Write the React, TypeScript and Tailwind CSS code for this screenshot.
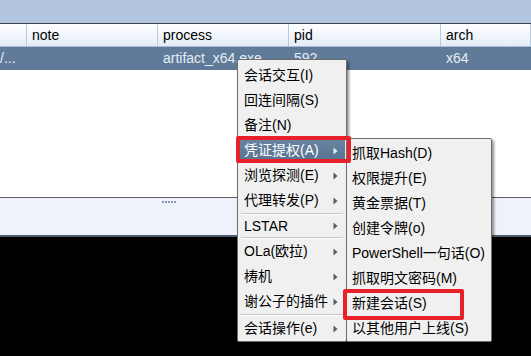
import { ReactNode } from 'react';

const font = { fontFamily: '"Liberation Sans", "Noto Sans CJK SC", sans-serif' };

type MenuItem = { label: string; sub?: boolean; active?: boolean; h?: string } | 'sep';

const mainItems: MenuItem[] = [
  { label: '会话交互(I)' },
  { label: '回连间隔(S)' },
  { label: '备注(N)' },
  { label: '凭证提权(A)', sub: true, active: true },
  { label: '浏览探测(E)', sub: true },
  { label: '代理转发(P)', sub: true },
  'sep',
  { label: 'LSTAR', sub: true, h: 'h-[22px]' },
  'sep',
  { label: 'OLa(欧拉)', sub: true },
  { label: '梼机', sub: true },
  { label: '谢公子的插件', sub: true },
  'sep',
  { label: '会话操作(e)', sub: true },
];

const subItems = [
  '抓取Hash(D)',
  '权限提升(E)',
  '黄金票据(T)',
  '创建令牌(o)',
  'PowerShell一句话(O)',
  '抓取明文密码(M)',
  '新建会话(S)',
  '以其他用户上线(S)',
];

function Arrow({ light }: { light?: boolean }) {
  return (
    <svg width="5" height="8" viewBox="0 0 5 8" className="absolute right-[7px] top-1/2 -translate-y-1/2">
      <path d="M0.5 0.5 L4.5 4 L0.5 7.5 Z" fill={light ? '#e6ecf3' : '#5a5a5a'} />
    </svg>
  );
}

function HeaderCell({ w, children }: { w: string; children?: ReactNode }) {
  return (
    <div className={`${w} h-full shrink-0 border-r border-[#b7c9df] pl-[5px] flex items-center`}>{children}</div>
  );
}

function RowCell({ w, children }: { w: string; children?: ReactNode }) {
  return <div className={`${w} h-full shrink-0 pl-[5px] flex items-center`}>{children}</div>;
}

export default function App() {
  return (
    <div className="relative w-[531px] h-[356px] overflow-hidden bg-white text-[14px] text-black" style={font}>
      {/* top band */}
      <div className="h-[23px] bg-[#b2c5de]" />

      {/* table header */}
      <div className="h-[24px] flex border-t border-[#3c4450] border-b border-b-[#a9bdd6] bg-gradient-to-b from-white to-[#e4ecf7]">
        <HeaderCell w="w-[27px]" />
        <HeaderCell w="w-[131px]">note</HeaderCell>
        <HeaderCell w="w-[131px]">process</HeaderCell>
        <HeaderCell w="w-[152px]">pid</HeaderCell>
        <HeaderCell w="w-[90px]">arch</HeaderCell>
      </div>

      {/* selected row */}
      <div className="h-[23px] flex bg-[#607b99] text-[#e6edf5]">
        <div className="w-[27px] h-full shrink-0 flex items-center">/...</div>
        <RowCell w="w-[131px]" />
        <RowCell w="w-[131px]">artifact_x64.exe</RowCell>
        <RowCell w="w-[152px]">592</RowCell>
        <RowCell w="w-[90px]">x64</RowCell>
      </div>

      {/* empty list area */}
      <div className="h-[127px] bg-white" />

      {/* splitter strip */}
      <div className="h-[40px] border-t border-[#5c5c5c] border-b-2 border-b-[#4d5b6c] bg-[#eef2fb] flex justify-center">
        <div className="mt-[3px] mr-[194px] flex gap-[1px]">
          {[0, 1, 2, 3, 4].map((i) => (
            <span key={i} className="w-[2px] h-[2px] bg-[#8a9bb3]" />
          ))}
        </div>
      </div>

      {/* console */}
      <div className="h-[119px] bg-black" />

      {/* context menu */}
      <div className="absolute left-[237px] top-[59px] w-[110px] h-[283px] bg-[#f0f0f0] border border-[#6e6e6e] rounded-[2px] shadow-[2px_2px_3px_rgba(0,0,0,0.45)] pt-[3px] px-[1px]">
        {mainItems.map((it, i) =>
          it === 'sep' ? (
            <div key={i} className="h-[2px] mx-[2px] border-t border-[#c4c4c4] border-b border-b-white" />
          ) : (
            <div
              key={i}
              className={`relative ${it.h ?? 'h-[25px]'} flex items-center pl-[5px] whitespace-nowrap ${
                it.active ? 'bg-gradient-to-b from-[#6985a3] to-[#56728f] text-white' : ''
              }`}
            >
              {it.label}
              {it.sub && <Arrow light={it.active} />}
            </div>
          )
        )}
      </div>

      {/* sub menu */}
      <div className="absolute left-[346px] top-[138px] w-[146px] h-[204px] bg-[#f0f0f0] border border-[#6e6e6e] rounded-[2px] shadow-[2px_2px_3px_rgba(0,0,0,0.45)] pt-[2px]">
        {subItems.map((s) => (
          <div key={s} className="h-[25px] flex items-center pl-[5px] whitespace-nowrap">
            {s}
          </div>
        ))}
      </div>

      {/* red highlight boxes */}
      <div className="absolute left-[236px] top-[136px] w-[115px] h-[27px] border-[4px] border-[#e8202a] rounded-[2px]" />
      <div className="absolute left-[343px] top-[289px] w-[121px] h-[31px] border-[4px] border-[#e8202a] rounded-[2px]" />
    </div>
  );
}
